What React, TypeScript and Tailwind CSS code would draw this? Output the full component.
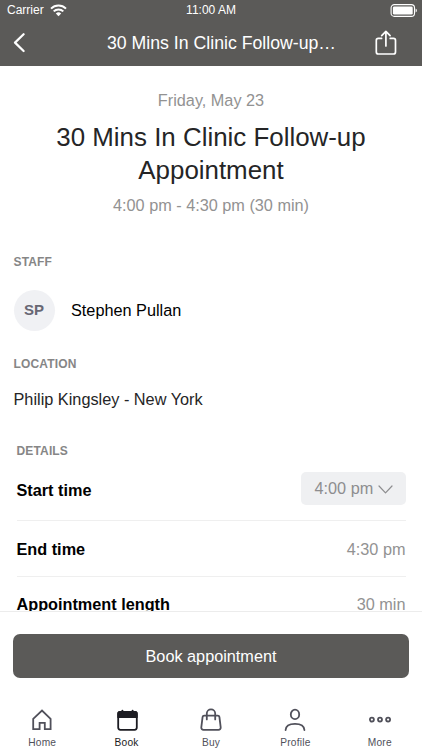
import type { ReactNode } from "react";

function StatusBar() {
  return (
    <div className="grid h-[20px] grid-cols-3 items-center pl-[7px] pr-[4px] text-[12px] leading-[20px]">
      <div className="flex items-center gap-[6px]">
        <span>Carrier</span>
        <svg width="17" height="13" viewBox="0 0 17 13" fill="none" stroke="white" strokeWidth="2">
          <path d="M1 4.6a10.6 10.6 0 0 1 15 0" />
          <path d="M3.7 7.4a6.8 6.8 0 0 1 9.6 0" />
          <path d="M8.5 12.2 5.8 9.5a3.8 3.8 0 0 1 5.4 0z" fill="white" stroke="none" />
        </svg>
      </div>
      <span className="pr-[3px] text-center">11:00 AM</span>
      <svg className="justify-self-end" width="28" height="13" viewBox="0 0 28 13" fill="none">
        <rect x="1.1" y="0.6" width="23.4" height="11.8" rx="3.2" stroke="white" strokeWidth="1.1" />
        <rect x="2.9" y="2.4" width="19.8" height="8.2" rx="1.4" fill="white" />
        <path d="M25.6 4.5c1.7.6 1.7 3.4 0 4z" fill="white" />
      </svg>
    </div>
  );
}

function SectionLabel({ children }: { children: ReactNode }) {
  return <h2 className="text-[12px] leading-[16px] font-bold tracking-[0.15px] text-[#868686]">{children}</h2>;
}

function Tab({ label, active, children }: { label: string; active?: boolean; children: ReactNode }) {
  return (
    <div className={active ? "flex flex-1 flex-col items-center text-[#1c1c22]" : "flex flex-1 flex-col items-center text-[#50505a]"}>
      <svg width="26" height="26" viewBox="0 0 26 26" fill="none" stroke="currentColor" strokeWidth="1.8" strokeLinecap="round" strokeLinejoin="round">
        {children}
      </svg>
      <span className="mt-[4px] text-[10.2px] leading-[12px] tracking-[0.2px]">{label}</span>
    </div>
  );
}

export default function App() {
  return (
    <div className="flex h-[750px] w-[422px] flex-col overflow-hidden bg-white font-['Liberation_Sans',Arial,sans-serif] text-[16.25px]">
      <header className="h-[66px] shrink-0 bg-[#5b5a58] text-white">
        <StatusBar />
        <div className="flex h-[46px] items-center justify-between pl-[13px] pr-[25px]">
          <svg width="55" height="20" viewBox="0 0 55 20" fill="none" stroke="white" strokeWidth="2.2" strokeLinecap="round" strokeLinejoin="round">
            <path d="M10.6 1.2 2 9.6l8.6 8.4" />
          </svg>
          <h1 className="text-[17.7px] leading-[24px]">30 Mins In Clinic Follow-up…</h1>
          <svg width="22" height="26" viewBox="0 0 22 26" fill="none" stroke="white" strokeWidth="1.7" strokeLinecap="round" strokeLinejoin="round">
            <path d="M6.6 8.4H3.3a2 2 0 0 0-2 2v11.6a2 2 0 0 0 2 2h15.2a2 2 0 0 0 2-2V10.4a2 2 0 0 0-2-2h-3.3" />
            <path d="M10.9 16V1.4M6.7 5.6l4.2-4.2 4.2 4.2" />
          </svg>
        </div>
      </header>

      <main className="h-[545px] shrink-0 overflow-hidden">
        <section className="pt-[24px] text-center">
          <p className="leading-[20px] text-[#929292]">Friday, May 23</p>
          <h2 className="mt-[11px] text-[25.9px] leading-[33px] text-[#252526]">
            30 Mins In Clinic Follow-up
            <br />
            Appointment
          </h2>
          <p className="mt-[8px] leading-[20px] text-[#929292]">4:00 pm - 4:30 pm (30 min)</p>
        </section>

        <section className="mt-[39px] pl-[13.5px]">
          <SectionLabel>STAFF</SectionLabel>
          <div className="mt-[20px] flex h-[41px] items-center gap-[16.5px]">
            <div className="flex size-[41px] items-center justify-center rounded-full bg-[#f0f1f4] text-[15px] font-bold text-[#686874]">SP</div>
            <span className="text-black">Stephen Pullan</span>
          </div>
        </section>

        <section className="mt-[25px] pl-[13.5px]">
          <SectionLabel>LOCATION</SectionLabel>
          <p className="mt-[17px] text-[16.3px] leading-[20px] text-[#252526]">Philip Kingsley - New York</p>
        </section>

        <section className="mt-[34px] pl-[16.5px] pr-[16.5px]">
          <SectionLabel>DETAILS</SectionLabel>
          <div className="flex h-[62px] items-center justify-between border-b border-[#efefef]">
            <span className="mt-[2px] font-bold text-black">Start time</span>
            <button className="mb-[3px] flex h-[33px] w-[105px] items-center gap-[5px] rounded-[5px] bg-[#eff0f2] pl-[14px] text-[#8d8d8f]">
              4:00 pm
              <svg className="mt-[2px]" width="15" height="9" viewBox="0 0 15 9" fill="none" stroke="currentColor" strokeWidth="1.2" strokeLinecap="round" strokeLinejoin="round">
                <path d="M1 1l6.5 6.8L14 1" />
              </svg>
            </button>
          </div>
          <div className="flex h-[56px] items-center justify-between border-b border-[#efefef] pt-[1px]">
            <span className="font-bold text-black">End time</span>
            <span className="text-[#929292]">4:30 pm</span>
          </div>
          <div className="flex h-[55px] items-center justify-between">
            <span className="font-bold text-black">Appointment length</span>
            <span className="text-[#929292]">30 min</span>
          </div>
        </section>
      </main>

      <div className="shrink-0 border-t border-[#ececec] px-[13px] pt-[22px]">
        <button className="h-[44px] w-full rounded-[7px] bg-[#5b5a58] text-white">Book appointment</button>
      </div>

      <nav className="mt-[29px] flex shrink-0">
        <Tab label="Home">
          <path d="M4.2 11.8 13 3.5l8.6 8.3v10.4h-5.8v-6.4h-5.2v6.4H4.2z" strokeLinejoin="miter" />
        </Tab>
        <Tab label="Book" active>
          <rect x="4.2" y="5" width="18.6" height="17.8" rx="2.2" />
          <path d="M4.2 10.2V6.6A1.6 1.6 0 0 1 5.8 5h15.4a1.6 1.6 0 0 1 1.6 1.6v3.6z" fill="currentColor" />
          <path d="M8.4 3.8v2M18.6 3.8v2" strokeWidth="2" />
        </Tab>
        <Tab label="Buy">
          <path d="M6.2 8.6h13.6a1.6 1.6 0 0 1 1.6 1.3l1.3 10.4a2.2 2.2 0 0 1-2.2 2.5h-15a2.2 2.2 0 0 1-2.2-2.5L4.6 9.9a1.6 1.6 0 0 1 1.6-1.3z" />
          <path d="M8.8 12.4V6.6a4.2 4.2 0 0 1 8.4 0v5.8" />
        </Tab>
        <Tab label="Profile">
          <ellipse cx="13" cy="7.4" rx="4.2" ry="4.7" />
          <path d="M3.6 23c.2-4.2 3.6-6.2 9.4-6.2s9.2 2 9.4 6.2" />
        </Tab>
        <Tab label="More">
          <circle cx="4.9" cy="12.6" r="2" />
          <circle cx="13" cy="12.6" r="2" />
          <circle cx="21.1" cy="12.6" r="2" />
        </Tab>
      </nav>
    </div>
  );
}
